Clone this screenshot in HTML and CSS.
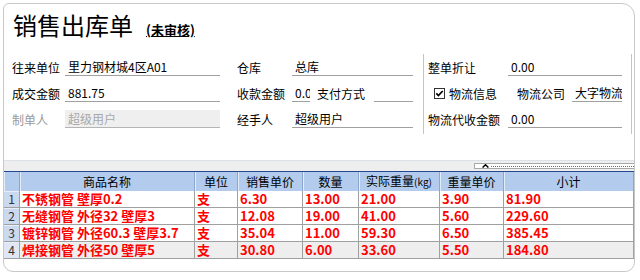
FILE: index.html
```html
<!DOCTYPE html>
<html lang="zh-CN">
<head>
<meta charset="utf-8">
<title>销售出库单</title>
<link rel="stylesheet" href="styles.css">
</head>
<body>
<div class="frame">
  <div class="title">
    <span class="title-main">销售出库单</span>
    <span class="status">(未审核)</span>
  </div>
  <div class="form">
    <div class="col col1">
      <div class="row"><span class="label w53">往来单位</span><span class="field w155">里力钢材城4区A01</span></div>
      <div class="row"><span class="label w53">成交金额</span><span class="field w155">881.75</span></div>
      <div class="row"><span class="label w53 muted">制单人</span><span class="field w155 disabled">超级用户</span></div>
    </div>
    <div class="col col2">
      <div class="row"><span class="label w55">仓库</span><span class="field w121">总库</span></div>
      <div class="row"><span class="label w55">收款金额</span><span class="field w18">0.00</span><span class="label w48 ml7">支付方式</span><span class="field w39 ml9"></span></div>
      <div class="row"><span class="label w55">经手人</span><span class="field w121">超级用户</span></div>
    </div>
    <div class="col col3">
      <div class="row"><span class="label w80">整单折让</span><span class="field w114">0.00</span></div>
      <div class="row">
        <svg class="check" width="11" height="11" viewBox="0 0 11 11"><rect x="0.5" y="0.5" width="10" height="10" fill="#fff" stroke="#333"/><path d="M2.3 5.4 L4.4 7.6 L8.7 3" fill="none" stroke="#000" stroke-width="1.7"/></svg>
        <span class="label w48 ml4">物流信息</span>
        <span class="label w48 ml20">物流公司</span>
        <span class="field w50 ml7">大字物流</span>
      </div>
      <div class="row"><span class="label w80">物流代收金额</span><span class="field w114">0.00</span></div>
    </div>
  </div>
  <div class="splitter">
    <div class="handle">
      <svg class="caret" width="7" height="4" viewBox="0 0 7 4"><path d="M0.6 3.6 L3.5 0.7 L6.4 3.6" fill="none" stroke="#000" stroke-width="1.4"/></svg>
      <span class="dots"></span>
    </div>
  </div>
  <table class="grid">
    <colgroup>
      <col class="c-no"><col class="c-name"><col class="c-unit"><col class="c-price"><col class="c-qty"><col class="c-wt"><col class="c-wprice"><col class="c-sum">
    </colgroup>
    <thead>
      <tr><th></th><th>商品名称</th><th>单位</th><th>销售单价</th><th>数量</th><th>实际重量<span class="kg">(kg)</span></th><th>重量单价</th><th>小计</th></tr>
    </thead>
    <tbody>
      <tr><td class="no">1</td><td>不锈钢管 壁厚0.2</td><td>支</td><td>6.30</td><td>13.00</td><td>21.00</td><td>3.90</td><td>81.90</td></tr>
      <tr><td class="no">2</td><td>无缝钢管 外径32 壁厚3</td><td>支</td><td>12.08</td><td>19.00</td><td>41.00</td><td>5.60</td><td>229.60</td></tr>
      <tr><td class="no">3</td><td>镀锌钢管 外径60.3 壁厚3.7</td><td>支</td><td>35.04</td><td>11.00</td><td>59.30</td><td>6.50</td><td>385.45</td></tr>
      <tr class="sel"><td class="no">4</td><td>焊接钢管 外径50 壁厚5</td><td>支</td><td>30.80</td><td>6.00</td><td>33.60</td><td>5.50</td><td>184.80</td></tr>
    </tbody>
  </table>
</div>
</body>
</html>
```

FILE: styles.css
```css
* { box-sizing: border-box; }
body {
  margin: 0;
  background: #fff;
  font-family: "Noto Sans CJK SC", "Liberation Sans", sans-serif;
  font-size: 12px;
  color: #000;
}
.frame {
  margin: 3px 0 0 3px;
  width: 632px;
  height: 269px;
  border: 1px solid #c8c8c8;
  border-radius: 6px 13px 10px 10px;
  overflow: hidden;
}
.title {
  height: 50px;
  padding: 9px 0 0 9px;
  display: flex;
  align-items: baseline;
}
.title-main { font-size: 24px; line-height: 24px; }
.status {
  font-size: 13px;
  line-height: 16px;
  font-weight: bold;
  text-decoration: underline;
  margin-left: 13px;
}
.form {
  height: 106px;
  padding-left: 8px;
  display: flex;
  align-items: flex-start;
}
.col1 { width: 208px; }
.col2 { width: 176px; margin-left: 17px; }
.col3 {
  width: 209px;
  margin-left: 10px;
  border-left: 1px solid #c4c4c4;
  border-right: 1px solid #c4c4c4;
  padding: 0 9px 2px 4px;
}
.row { height: 26px; display: flex; align-items: center; }
.label { flex: none; white-space: nowrap; line-height: 17px; }
.muted { color: #9a9a9a; }
.field {
  flex: none;
  height: 18px;
  line-height: 17px;
  padding-left: 3px;
  border-bottom: 1px solid #a0a0a0;
  white-space: nowrap;
  overflow: hidden;
}
.disabled { background: #efefef; color: #a8a8a8; border-bottom-color: #b4b4b4; }
.w18 { width: 18px; }
.w39 { width: 39px; }
.w48 { width: 48px; }
.w50 { width: 50px; }
.w53 { width: 53px; }
.w55 { width: 55px; }
.w80 { width: 80px; }
.w114 { width: 114px; }
.w121 { width: 121px; }
.w155 { width: 155px; }
.ml4 { margin-left: 4px; }
.ml7 { margin-left: 7px; }
.ml9 { margin-left: 9px; }
.ml20 { margin-left: 20px; }
.check { flex: none; margin-left: 6px; display: block; }

.splitter {
  height: 11px;
  background: #eeeeee;
  border-top: 1px solid #dce1e8;
  display: flex;
  align-items: center;
  justify-content: flex-end;
}
.handle {
  width: 160px;
  height: 6px;
  border: 1px solid #a8a8a8;
  border-right: none;
  background: #fff;
  display: flex;
  align-items: center;
  padding-left: 7px;
}
.caret { display: block; flex: none; }
.dots { flex: 1; height: 0; border-top: 1px dotted #3a6fd0; margin-left: 2px; }

.grid {
  border-collapse: separate;
  border-spacing: 0;
  table-layout: fixed;
  width: 630px;
  border-top: 1px solid #25478f;
}
.c-no { width: 16px; }
.c-name { width: 175px; }
.c-unit { width: 43px; }
.c-price { width: 65px; }
.c-qty { width: 56px; }
.c-wt { width: 81px; }
.c-wprice { width: 64px; }
.c-sum { width: 130px; }
.grid th {
  background: #b3cbed;
  font-weight: normal;
  font-size: 12px;
  line-height: 18px;
  height: 18px;
  padding: 0;
  border-right: 1px solid #8da6cf;
  box-shadow: inset 1px 0 #e3ecf9;
  text-align: center;
  white-space: nowrap;
}
.kg { font-size: 10px; }
.grid td {
  line-height: 16px;
  height: 17px;
  padding: 0 0 0 2px;
  border-right: 1px solid #a0a0a0;
  border-bottom: 1px solid #a0a0a0;
  color: #ff0000;
  font-weight: bold;
  font-size: 13px;
  white-space: nowrap;
  background: #fff;
}
.grid td.no {
  color: #333;
  font-weight: normal;
  font-size: 12px;
  text-align: center;
  padding: 0;
  background: #cbd9ef;
  box-shadow: inset 0 1px #e8eef8;
}
.grid tr.sel td { background: #eeeeee; }
.grid tr.sel td.no { background: #dfe7f4; }
```
